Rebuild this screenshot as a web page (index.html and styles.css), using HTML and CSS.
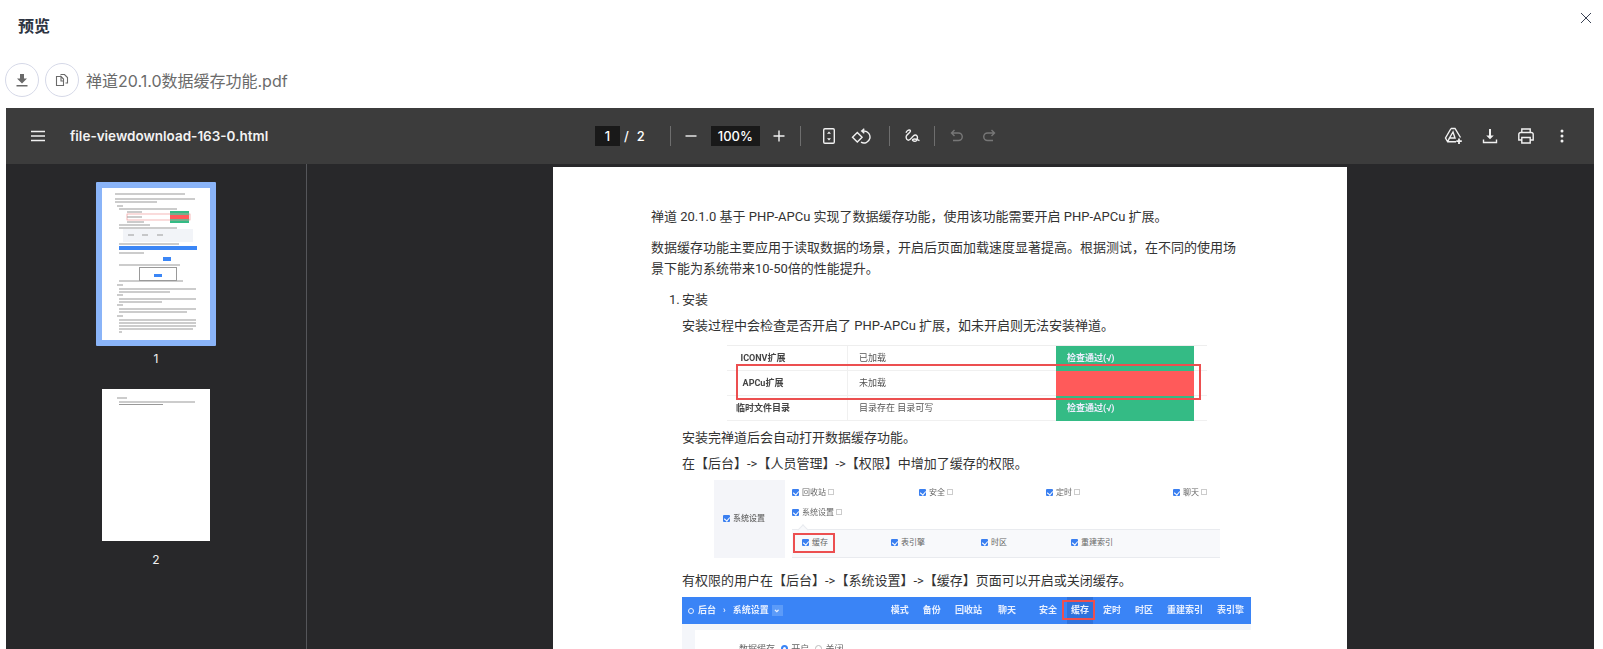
FILE: index.html
```html
<!DOCTYPE html>
<html lang="zh">
<head>
<meta charset="utf-8">
<title>预览</title>
<link rel="stylesheet" href="styles.css">
</head>
<body>
<div class="modal_head">
	<h1>预览</h1>
	<button class="close_btn" type="button">
		<svg width="10" height="10" viewBox="0 0 10 10"><path d="M0 0L10 10M10 0L0 10"/></svg>
	</button>
</div>

<div class="file_row">
	<button class="round_btn" type="button">
		<svg width="14" height="14" viewBox="0 0 14 14"><path class="solid" d="M5 1h4v4.500h3L7 10.500 2 5.500h3zM1.500 12h11v1.500h-11z"/></svg>
	</button>
	<button class="round_btn" type="button">
		<svg width="16" height="16" viewBox="0 0 16 16"><path d="M7 4.500H2.500v9h7V9M7 4.500L9.500 7V9H7V4.500zM6.500 2.500h4l3 3V11h-2"/></svg>
	</button>
	<span class="file_name">禅道20.1.0数据缓存功能.pdf</span>
</div>

<div class="viewer">
	<div class="toolbar">
		<div class="tb_left">
			<svg class="menu_icon" width="16" height="12" viewBox="0 0 16 12"><path d="M1 1.500h14M1 6h14M1 10.500h14"/></svg>
			<span class="doc_title">file-viewdownload-163-0.html</span>
		</div>
		<div class="tb_center">
			<span class="num_box page_box">1</span>
			<span class="page_slash">/</span>
			<span class="page_total">2</span>
			<span class="sep sep_a"></span>
			<span class="tb_btn"><svg width="14" height="14" viewBox="0 0 14 14"><path d="M1.500 7h11"/></svg></span>
			<span class="num_box zoom_box">100%</span>
			<span class="tb_btn"><svg width="14" height="14" viewBox="0 0 14 14"><path d="M1.500 7h11M7 1.500v11"/></svg></span>
			<span class="sep sep_b"></span>
			<span class="tb_btn">
				<svg width="14" height="18" viewBox="0 0 14 18"><rect x="1.700" y="1.700" width="10.600" height="14.600" rx="1.200"/><path class="solid" d="M7 4.500l2 2.300H5zM7 13.500l-2-2.300h4z"/></svg>
			</span>
			<span class="tb_btn">
				<svg width="20" height="20" viewBox="0 0 20 20"><path d="M6.300 6.500L11.100 11.300 6.300 16.100 1.500 11.300zM13.300 2.700L10.700 5l2.600 2.300M11 5h2a6 6 0 1 1-3 11.200"/></svg>
			</span>
			<span class="sep sep_c"></span>
			<span class="tb_btn">
				<svg width="18" height="18" viewBox="0 0 18 18"><path d="M3 5.700C3.800 3.800 5.500 2.500 7 3.200 8.500 4 6 6.200 4 8 2.500 9.500 3 12.500 5 13.200 7 13.800 8.500 10.500 10.300 9 11.500 7.800 13.500 7.500 14.300 9.500 15 11.500 13.500 14.500 12 14.300 10 14 8.700 13 10 12.300 12 11.300 15 13 16.500 13.700"/></svg>
			</span>
			<span class="sep"></span>
			<span class="tb_btn off">
				<svg width="16" height="16" viewBox="0 0 16 16"><path d="M5.500 2L2.500 5l3 3M2.500 5h7a3.700 3.700 0 0 1 0 7.500H4"/></svg>
			</span>
			<span class="tb_btn off">
				<svg width="16" height="16" viewBox="0 0 16 16"><path d="M10.500 2l3 3-3 3M13.500 5h-7a3.700 3.700 0 0 0 0 7.500H12"/></svg>
			</span>
		</div>
		<div class="tb_right">
			<span class="tb_btn wide">
				<svg width="20" height="18" viewBox="0 0 20 18"><path d="M7 1.500h4L16.500 10.500M7 1.500L1.500 11l2.200 3.800H12M9 5L5.500 11h5.500zM3.700 14.800L5.500 11"/><path class="thick" d="M15 11.500v5.500M12.300 14.200h5.500"/></svg>
			</span>
			<span class="tb_btn wide">
				<svg width="16" height="16" viewBox="0 0 16 16"><path class="solid" d="M7 1h2v6.500h2.800L8 11.300 4.200 7.500H7z"/><path d="M1.500 11.500v3h13v-3"/></svg>
			</span>
			<span class="tb_btn wide">
				<svg width="18" height="18" viewBox="0 0 18 18"><path d="M4.800 5.500V2h8.400v3.500M4.800 13H1.800V7.500a2 2 0 0 1 2-2h10.400a2 2 0 0 1 2 2V13h-3M4.800 10.500h8.400V16H4.800z"/></svg>
			</span>
			<span class="tb_btn wide">
				<svg width="4" height="14" viewBox="0 0 4 14"><circle class="solid" cx="2" cy="2" r="1.500"/><circle class="solid" cx="2" cy="7" r="1.500"/><circle class="solid" cx="2" cy="12" r="1.500"/></svg>
			</span>
		</div>
	</div>

	<div class="viewer_body">
		<div class="sidebar">
			<div class="thumb selected">
				<svg class="thumb_page" width="108" height="152" viewBox="0 0 108 152">
					<g class="thumb_blur">
						<rect x="21" y="41" width="70" height="13" fill="#f2f4f8"/>
						<rect x="68" y="23" width="19" height="12" fill="#34bb85"/>
						<rect x="68" y="27" width="19" height="4" fill="#ff5a5a"/>
						<rect x="25" y="26" width="63" height="6" fill="none" stroke="#f09a9a" stroke-width=".7"/>
						<rect x="17" y="58" width="78" height="4" fill="#3b86f6"/>
						<rect x="61" y="69" width="8" height="4" fill="#3b86f6"/>
						<rect x="37.500" y="79.500" width="37" height="13" fill="#fff" stroke="#999"/>
						<rect x="52" y="86" width="8" height="3" fill="#3b86f6"/>
						<path class="thumb_lines" d="M13 6h70M13 11h80M13 14h42M15 18h6M17 21h58M25 24h10M32 24h8M25 29h8M32 29h8M25 34h10M32 34h10M17 37h31M17 40h58M17 56h60M26 47h6M40 47h6M55 47h6M17 65h25M17 77h61M17 93h64M15 97h6M17 101h77M17 104h51M15 107h6M17 111h77M17 114h43M15 117h6M17 121h77M17 124h68M15 128h6M17 132h77M17 135h77M17 138h77M17 141h74M17 144h3"/>
					</g>
				</svg>
			</div>
			<div class="thumb_num">1</div>
			<div class="thumb">
				<svg class="thumb_page" width="108" height="152" viewBox="0 0 108 152">
					<g class="thumb_blur">
						<path class="thumb_lines" d="M15 9h10M17 13h76M17 15.500h44"/>
					</g>
				</svg>
			</div>
			<div class="thumb_num">2</div>
		</div>

		<div class="doc_area">
			<div class="pdf_page">
				<p>禅道 20.1.0 基于 PHP-APCu 实现了数据缓存功能，使用该功能需要开启 PHP-APCu 扩展。</p>
				<p>数据缓存功能主要应用于读取数据的场景，开启后页面加载速度显著提高。根据测试，在不同的使用场景下能为系统带来10-50倍的性能提升。</p>
				<div class="sect">
					<p class="sect_head"><span class="sect_no">1.</span>安装</p>
					<p class="tight">安装过程中会检查是否开启了 PHP-APCu 扩展，如未开启则无法安装禅道。</p>

					<div class="shot_table">
						<div class="st_row">
							<span class="st_label">ICONV扩展</span><span class="st_val">已加载</span><span class="st_cell ok">检查通过(√)</span>
						</div>
						<div class="st_row">
							<span class="st_label">APCu扩展</span><span class="st_val">未加载</span><span class="st_cell bad"></span>
						</div>
						<div class="st_row">
							<span class="st_label">临时文件目录</span><span class="st_val">目录存在 目录可写</span><span class="st_cell ok">检查通过(√)</span>
						</div>
						<div class="mark mark_apcu"></div>
					</div>

					<p class="after_shot">安装完禅道后会自动打开数据缓存功能。</p>
					<p class="tight2">在【后台】-&gt;【人员管理】-&gt;【权限】中增加了缓存的权限。</p>

					<div class="shot_perm">
						<div class="perm_side"><i class="cb"></i>系统设置</div>
						<div class="perm_main">
							<div class="perm_row">
								<span><i class="cb"></i>回收站<i class="minus_box"></i></span>
								<span><i class="cb"></i>安全<i class="minus_box"></i></span>
								<span><i class="cb"></i>定时<i class="minus_box"></i></span>
								<span><i class="cb"></i>聊天<i class="minus_box"></i></span>
							</div>
							<div class="perm_row"><span><i class="cb"></i>系统设置<i class="minus_box"></i></span></div>
							<div class="perm_sub">
								<span><i class="cb"></i>缓存</span>
								<span><i class="cb"></i>表引擎</span>
								<span><i class="cb"></i>时区</span>
								<span><i class="cb"></i>重建索引</span>
								<div class="mark mark_cache"></div>
							</div>
						</div>
					</div>

					<p class="after_perm">有权限的用户在【后台】-&gt;【系统设置】-&gt;【缓存】页面可以开启或关闭缓存。</p>

					<div class="shot_admin">
						<div class="admin_nav">
							<div class="crumbs"><span class="crumb_dot"></span>后台<span class="crumb_sep">›</span>系统设置<span class="crumb_more">⌄</span></div>
							<div class="nav_items">
								<span>模式</span><span>备份</span><span class="nav_wide">回收站</span><span class="nav_last">聊天</span>
								<span>安全</span><span class="active">缓存<i class="mark mark_nav"></i></span><span>定时</span><span>时区</span><span>重建索引</span><span>表引擎</span>
							</div>
						</div>
						<div class="admin_body">
							<div class="admin_card">数据缓存 <i class="radio on"></i>开启 <i class="radio"></i>关闭</div>
						</div>
					</div>
				</div>
			</div>
		</div>
	</div>
</div>
</body>
</html>
```

FILE: styles.css
```css
* {
	box-sizing: border-box;
}
html, body {
	height: 649px;
	overflow: hidden;
}
body {
	margin: 0;
	background: #fff;
	font-family: Inter, "Noto Sans CJK SC", sans-serif;
}
button {
	padding: 0;
	background: none;
	cursor: pointer;
}

/* modal head */
.modal_head {
	display: flex;
	justify-content: space-between;
	height: 63px;
	padding: 13px 12px 0 18px;
}
.modal_head h1 {
	margin: 0;
	font-size: 16px;
	line-height: 26px;
	font-weight: 700;
	color: #2d3442;
}
.close_btn {
	align-self: flex-start;
	height: 10px;
	margin-top: 0;
	border: 0;
	display: flex;
}
.close_btn path {
	fill: none;
	stroke: #3a4254;
	stroke-width: 1;
}

/* file row */
.file_row {
	display: flex;
	align-items: center;
	gap: 6px;
	height: 34px;
	margin-bottom: 11px;
	padding-left: 5px;
}
.round_btn {
	display: flex;
	align-items: center;
	justify-content: center;
	width: 34px;
	height: 34px;
	border: 1px solid #d6d9e8;
	border-radius: 50%;
}
.round_btn path {
	fill: none;
	stroke: #6a6a6a;
	stroke-width: 1.100;
}
.round_btn path.solid {
	fill: #6a6a6a;
	stroke: none;
}
.file_name {
	margin-left: 1px;
	font-size: 16px;
	color: #6b6b6b;
}

/* pdf viewer */
.viewer {
	margin: 0 9px 0 6px;
	height: 541px;
	overflow: hidden;
	background: #28282a;
}
.toolbar {
	display: grid;
	grid-template-columns: 1fr 420px 1fr;
	align-items: center;
	height: 56px;
	background: #3c3c3c;
	color: #fff;
}
.toolbar svg {
	display: block;
	fill: none;
	stroke: #f1f1f1;
	stroke-width: 1.400;
}
.toolbar svg .solid {
	fill: #f1f1f1;
	stroke: none;
}
.toolbar svg .thick {
	stroke-width: 1.800;
}
.tb_left {
	display: flex;
	align-items: center;
	padding-left: 24px;
}
.menu_icon {
	margin-right: 24px;
}
.doc_title {
	font-size: 13.500px;
	font-weight: 600;
	color: #f3f3f3;
}
.tb_center {
	display: flex;
	align-items: center;
	padding-left: 5px;
	font-size: 13px;
	font-weight: 500;
}
.tb_right {
	display: flex;
	justify-content: flex-end;
	padding-right: 14px;
}
.num_box {
	height: 20px;
	line-height: 20px;
	text-align: center;
	background: #191919;
}
.page_box {
	width: 25px;
}
.zoom_box {
	width: 49px;
	margin: 0 3px 0 4px;
}
.page_slash {
	margin-left: 4px;
}
.page_total {
	margin-left: 8px;
}
.sep {
	width: 1px;
	height: 20px;
	margin: 0 6px;
	background: #6e6e6e;
}
.sep_a {
	margin: 0 4px 0 25px;
}
.sep_b {
	margin: 0 12px 0 5px;
}
.sep_c {
	margin: 0 6px 0 12px;
}
.tb_btn {
	display: flex;
	align-items: center;
	justify-content: center;
	width: 32px;
	height: 32px;
}
.tb_btn.wide {
	width: 36px;
}
.tb_btn.off svg {
	stroke: #777;
}

.viewer_body {
	display: flex;
	height: 485px;
}
.sidebar {
	flex: none;
	width: 301px;
	padding: 18px 0 0 90px;
	border-right: 1px solid #55565a;
	color: #f1f1f1;
	font-size: 12px;
}
.thumb {
	width: 120px;
	padding: 6px;
	border-radius: 1px;
}
.thumb.selected {
	background: #8ab4f8;
}
.thumb_page {
	display: block;
	background: #fff;
}
.thumb_blur {
	filter: blur(.6px);
}
.thumb_lines {
	fill: none;
	stroke: #999;
	stroke-width: 1.100;
}
.thumb_num {
	width: 120px;
	height: 37px;
	padding-top: 5px;
	text-align: center;
	line-height: 16px;
}

.doc_area {
	flex: 1;
	padding: 3px 0 0 246px;
	overflow: hidden;
}
.pdf_page {
	width: 794px;
	height: 600px;
	padding: 39px 107px 0 98px;
	background: #fff;
	font-family: Roboto, "Noto Sans CJK SC", sans-serif;
	font-size: 13px;
	line-height: 21.500px;
	color: #333;
}
.pdf_page p {
	margin: 0 0 9px 0;
}
.sect {
	padding-left: 31px;
}
.sect_head {
	position: relative;
}
.sect_no {
	position: absolute;
	left: -13px;
}
.pdf_page .tight {
	margin-top: -4px;
	margin-bottom: 8px;
}

/* screenshot: install check */
.shot_table {
	position: relative;
	width: 480px;
	margin-left: 45px;
	font-size: 9px;
	color: #555;
	border-top: 1px solid #eee;
	filter: blur(.3px);
}
.st_row {
	display: grid;
	grid-template-columns: 121px 208px 138px;
	height: 25px;
	line-height: 25px;
	border-bottom: 1px solid #f0f0f0;
}
.st_row:last-of-type {
	border-bottom: 0;
}
.st_label {
	padding-right: 48px;
	text-align: center;
	font-weight: 700;
	color: #444;
	border-right: 1px solid #f0f0f0;
}
.st_val {
	padding-left: 11px;
}
.st_cell {
	padding-left: 11px;
	font-weight: 700;
	color: #eef;
}
.ok {
	background: #34bb85;
}
.bad {
	background: #ff5a5a;
}
.mark {
	position: absolute;
	border: 2px solid #ec4f50;
}
.mark_apcu {
	left: 9px;
	top: 18px;
	width: 465px;
	height: 36px;
}
.pdf_page .after_shot {
	margin: 6px 0 5px 0;
}
.pdf_page .tight2 {
	margin-bottom: 5px;
}

/* screenshot: permissions */
.shot_perm {
	display: grid;
	grid-template-columns: 71px 435px;
	width: 506px;
	height: 78px;
	margin-left: 32px;
	font-size: 8px;
	line-height: 12px;
	color: #666;
	filter: blur(.3px);
}
.perm_side {
	display: flex;
	align-items: center;
	padding-left: 9px;
	background: #f4f5f9;
	font-weight: 500;
}
.perm_main {
	padding: 7px 0 0 7px;
}
.perm_row {
	display: grid;
	grid-template-columns: repeat(4, 127px);
	height: 20px;
}
.perm_sub {
	position: relative;
	display: grid;
	grid-template-columns: 89px 90px 90px 90px;
	align-items: center;
	height: 29px;
	margin-top: 2px;
	padding-left: 10px;
	background: #f8f9fb;
	border-top: 1px solid #e9ebef;
	border-bottom: 1px solid #e9ebef;
}
.perm_sub::before {
	content: "";
	position: absolute;
	left: 7px;
	top: -4px;
	width: 7px;
	height: 7px;
	background: #f8f9fb;
	border-top: 1px solid #e9ebef;
	border-left: 1px solid #e9ebef;
	transform: rotate(45deg);
}
.cb {
	position: relative;
	display: inline-block;
	width: 7px;
	height: 7px;
	margin-right: 3px;
	border-radius: 1px;
	background: #3a7ff0;
	vertical-align: -1px;
}
.cb::after {
	content: "";
	position: absolute;
	left: 2px;
	top: 1px;
	width: 3px;
	height: 4px;
	border-right: 1px solid #fff;
	border-bottom: 1px solid #fff;
	transform: rotate(40deg);
}
.minus_box {
	display: inline-block;
	width: 6px;
	height: 6px;
	margin-left: 2px;
	border: 1px solid #ccc;
}
.mark_cache {
	left: 1px;
	top: 3px;
	width: 42px;
	height: 20px;
}
.pdf_page .after_perm {
	margin: 12px 0 6px 0;
}

/* screenshot: admin page */
.shot_admin {
	width: 569px;
	background: #f4f6fa;
	filter: blur(.3px);
}
.admin_nav {
	display: flex;
	justify-content: space-between;
	align-items: center;
	height: 27px;
	padding: 0 7px 0 6px;
	background: #3a84f6;
	font-size: 9px;
	line-height: 27px;
	font-weight: 700;
	color: #e8f0ff;
}
.crumbs {
	display: flex;
	align-items: center;
}
.crumb_dot {
	width: 6px;
	height: 6px;
	margin-right: 4px;
	border: 1px solid #e8f0ff;
	border-radius: 50%;
}
.crumb_sep {
	margin: 0 7px;
}
.crumb_more {
	width: 11px;
	height: 11px;
	margin-left: 3px;
	line-height: 8px;
	text-align: center;
	background: #5c9bf8;
}
.nav_items {
	display: flex;
	gap: 14px;
}
.nav_items span {
	position: relative;
}
.nav_wide {
	margin-right: 2px;
}
.nav_last {
	margin-right: 9px;
}
.active {
	padding: 0 4px;
	margin: 0 -4px;
	background: #2f72dd;
}
.mark_nav {
	left: -5px;
	top: 3px;
	width: 33px;
	height: 20px;
}
.admin_body {
	height: 30px;
	padding: 6px 0 0 13px;
}
.admin_card {
	height: 40px;
	padding: 12px 0 0 44px;
	background: #fff;
	font-size: 9px;
	line-height: 14px;
	color: #666;
}
.radio {
	display: inline-block;
	width: 7px;
	height: 7px;
	margin: 0 3px 0 4px;
	border: 1px solid #bbb;
	border-radius: 50%;
}
.radio.on {
	border: 2px solid #3a84f6;
}
```
